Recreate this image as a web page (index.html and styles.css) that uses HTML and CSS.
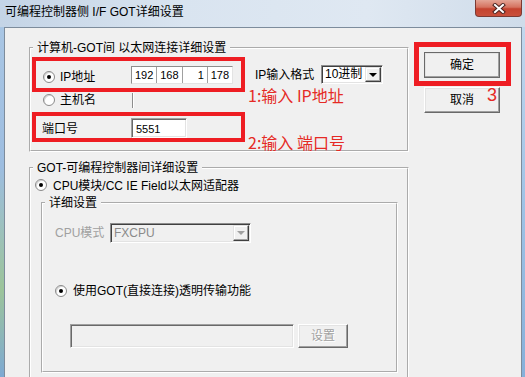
FILE: index.html
```html
<!DOCTYPE html>
<html>
<head>
    <meta charset="UTF-8">
    <title>可编程控制器侧 I/F GOT详细设置</title>
    <link rel="stylesheet" href="styles.css">
</head>
<body>
    <div class="window">
        <div class="titlebar">
            <span class="title">可编程控制器侧 I/F GOT详细设置</span>
            <span class="close">
                <svg width="14" height="11" viewBox="0 0 14 11">
                    <path d="M3 2 L11 9 M11 2 L3 9" stroke="#4a2320" stroke-width="4" stroke-linecap="square"/>
                    <path d="M3 2 L11 9 M11 2 L3 9" stroke="#fff" stroke-width="2" stroke-linecap="square"/>
                </svg>
            </span>
        </div>
        <div class="frame">
            <div class="frame-left"></div>
            <div class="client">
                <div class="main">
                    <fieldset class="group group-eth">
                        <legend>计算机-GOT间 以太网连接详细设置</legend>
                        <div class="row row-ip">
                            <div class="choice">
                                <span class="radio on"></span>
                                <span class="choice-text">IP地址</span>
                            </div>
                            <div class="ipbox">
                                <span>192</span>
                                <span>168</span>
                                <span>1</span>
                                <span>178</span>
                            </div>
                            <span class="fmt-label">IP输入格式</span>
                            <div class="combo combo-fmt">
                                <span class="combo-text">10进制</span>
                                <span class="combo-btn"><i class="arrow"></i></span>
                            </div>
                        </div>
                        <div class="row row-host">
                            <div class="choice">
                                <span class="radio"></span>
                                <span class="choice-text">主机名</span>
                            </div>
                            <span class="host-edge"></span>
                        </div>
                        <div class="row row-port">
                            <span class="port-label">端口号</span>
                            <div class="edit edit-port">5551</div>
                        </div>
                    </fieldset>

                    <fieldset class="group group-plc">
                        <legend>GOT-可编程控制器间详细设置</legend>
                        <div class="row row-adapter">
                            <span class="radio on"></span>
                            <span class="choice-text">CPU模块/CC IE Field以太网适配器</span>
                        </div>
                        <fieldset class="group group-detail">
                            <legend>详细设置</legend>
                            <div class="row row-cpu">
                                <span class="cpu-label">CPU模式</span>
                                <div class="combo combo-cpu disabled">
                                    <span class="combo-text">FXCPU</span>
                                    <span class="combo-btn"><i class="arrow"></i></span>
                                </div>
                            </div>
                            <div class="row row-pass">
                                <span class="radio on"></span>
                                <span class="choice-text">使用GOT(直接连接)透明传输功能</span>
                            </div>
                            <div class="row row-setting">
                                <div class="edit edit-setting"></div>
                                <span class="btn btn-setting">设置</span>
                            </div>
                        </fieldset>
                    </fieldset>
                </div>
                <div class="actions">
                    <span class="btn btn-ok">确定</span>
                    <span class="btn btn-cancel">取消</span>
                </div>
            </div>
            <div class="frame-right"></div>
        </div>

        <!-- annotations drawn over the screenshot -->
        <div class="mark mark-ip"></div>
        <div class="mark mark-port"></div>
        <div class="mark mark-ok"></div>
        <span class="note note-ip">1:输入 IP地址</span>
        <span class="note note-port">2:输入 端口号</span>
        <span class="note note-ok">3</span>
    </div>
</body>
</html>
```

FILE: styles.css
```css
* {
    margin: 0;
    padding: 0;
    box-sizing: border-box;
}
body {
    width: 525px;
    height: 377px;
    overflow: hidden;
    font-family: "Liberation Sans", "Noto Sans CJK SC", sans-serif;
    font-size: 12px;
    line-height: 14px;
    color: #000;
}
.window {
    position: relative;
    width: 525px;
    height: 377px;
    overflow: hidden;
    background: #c9d8e8;
}

/* title bar */
.titlebar {
    display: flex;
    justify-content: space-between;
    height: 27px;
    background: linear-gradient(90deg, #c4d4e6 0%, #d9e4f0 35%, #dfe8f2 70%, #cfdcea 100%);
}
.title {
    padding: 5px 0 0 5px;
    line-height: 14px;
}
.close {
    display: flex;
    align-items: center;
    justify-content: center;
    width: 47px;
    height: 17px;
    margin-right: 3px;
    border: 1px solid #7c3a33;
    border-top: 0;
    border-radius: 0 0 4px 4px;
    background: linear-gradient(#e4a596 0%, #d5725f 45%, #c4432f 55%, #c9503c 100%);
}

/* window frame */
.frame {
    display: flex;
    height: 350px;
}
.frame-left {
    width: 4px;
    background: linear-gradient(#a9c6e4 0%, #9dbde0 40%, #9cc49a 75%, #7ea9d3 100%);
}
.frame-right {
    width: 3px;
    background: linear-gradient(#c2d8ee 0%, #9fc3e6 50%, #86b0da 100%);
}
.client {
    display: flex;
    width: 518px;
    border: 1px solid #7d8c9c;
    border-bottom: 0;
    background: #f0f0f0;
}
.main {
    width: 380px;
    margin-left: 24px;
}

/* group boxes */
.group {
    min-width: 0;
    border: 2px groove #fff;
}
.group legend {
    margin-left: 2px;
    padding: 0 4px;
    line-height: 14px;
}
.group-eth {
    margin-top: 13px;
    padding-bottom: 12px;
}
.group-plc {
    margin-top: 9px;
    padding-bottom: 20px;
}
.group-detail {
    width: 357px;
    margin: 3px 0 0 10px;
    padding-bottom: 23px;
}
.row {
    display: flex;
    align-items: flex-start;
}

/* radios */
.radio {
    position: relative;
    flex: none;
    width: 12px;
    height: 12px;
    border: 1px solid #8a8a8a;
    border-radius: 50%;
    background: #fff;
    box-shadow: inset 1px 1px 0 #d6d6d6;
}
.radio.on::after {
    content: "";
    position: absolute;
    left: 3px;
    top: 3px;
    width: 4px;
    height: 4px;
    border-radius: 50%;
    background: #000;
}
.choice {
    display: flex;
    align-items: flex-start;
    width: 88px;
    margin-left: 12px;
}
.choice-text {
    margin-left: 5px;
    white-space: nowrap;
}

/* first group */
.row-ip {
    height: 19px;
    margin-top: 10px;
}
.row-ip .radio {
    margin-top: 6px;
}
.row-ip .choice-text {
    margin-top: 5px;
}
.ipbox {
    display: flex;
    width: 102px;
    height: 18px;
    margin-top: 1px;
    border: 1px solid;
    border-color: #8d8d8d #e3e3e3 #e3e3e3 #8d8d8d;
    background: #fff;
    font-size: 11px;
    line-height: 16px;
}
.ipbox span {
    flex: 1;
    padding-right: 3px;
    text-align: right;
    border-left: 1px solid #a0a0a0;
}
.ipbox span:first-child {
    border-left: 0;
}
.fmt-label {
    width: 66px;
    margin: 3px 0 0 22px;
    white-space: nowrap;
}
.combo {
    display: flex;
    border: 1px solid;
    border-color: #8d8d8d #fff #fff #8d8d8d;
    background: #fff;
    box-shadow: inset 1px 1px 0 #404040, inset -1px -1px 0 #e3e3e3;
}
.combo-text {
    flex: 1;
    padding: 1px 0 0 3px;
    font-size: 12px;
    line-height: 14px;
}
.combo-btn {
    display: flex;
    align-items: center;
    justify-content: center;
    width: 16px;
    margin: 1px 1px 1px 0;
    border: 1px solid;
    border-color: #e3e3e3 #404040 #404040 #e3e3e3;
    background: #f0f0f0;
    box-shadow: inset -1px -1px 0 #a0a0a0, inset 1px 1px 0 #fff;
}
.arrow {
    width: 0;
    height: 0;
    border-left: 4px solid transparent;
    border-right: 4px solid transparent;
    border-top: 4px solid #000;
}
.combo-fmt {
    width: 62px;
    height: 19px;
}
.row-host {
    height: 15px;
    margin-top: 9px;
}
.row-host .radio {
    margin-top: 1px;
}
.host-edge {
    width: 2px;
    height: 15px;
    margin-left: 1px;
    border-left: 1px solid #8d8d8d;
    border-right: 1px solid #fff;
}
.row-port {
    margin-top: 10px;
}
.port-label {
    width: 89px;
    margin: 4px 0 0 11px;
}
.edit {
    border: 1px solid;
    border-color: #a0a0a0 #fff #fff #a0a0a0;
    background: #fff;
    box-shadow: inset 1px 1px 0 #696969, inset -1px -1px 0 #e3e3e3;
}
.edit-port {
    width: 56px;
    height: 20px;
    padding: 3px 0 0 4px;
    font-size: 11px;
    line-height: 14px;
}

/* second group */
.row-adapter {
    margin-top: 4px;
}
.row-adapter .radio {
    margin-left: 4px;
}
.row-adapter .choice-text {
    margin-left: 6px;
}
.row-cpu {
    margin-top: 13px;
}
.cpu-label {
    width: 55px;
    margin: 3px 0 0 12px;
    color: #a0a0a0;
}
.combo-cpu {
    width: 141px;
    height: 20px;
}
.combo.disabled {
    background: #f0f0f0;
}
.combo.disabled .combo-text {
    padding-top: 2px;
    color: #8a8a8a;
}
.combo.disabled .arrow {
    border-top-color: #a0a0a0;
}
.row-pass {
    margin-top: 41px;
}
.row-pass .radio {
    margin: 1px 0 0 12px;
}
.row-pass .choice-text {
    margin-left: 6px;
}
.row-setting {
    margin-top: 26px;
}
.edit-setting {
    width: 224px;
    height: 24px;
    margin-left: 27px;
    background: #f0f0f0;
}

/* buttons */
.btn {
    display: flex;
    align-items: center;
    justify-content: center;
    border: 1px solid;
    border-color: #fff #696969 #696969 #fff;
    background: #f0f0f0;
    box-shadow: inset -1px -1px 0 #a0a0a0, inset 1px 1px 0 #e3e3e3;
}
.btn-setting {
    width: 50px;
    height: 24px;
    margin-left: 4px;
    color: #a0a0a0;
    text-shadow: 1px 1px 0 #fff;
}
.actions {
    display: flex;
    flex-direction: column;
    width: 76px;
    margin: 24px 0 0 15px;
}
.btn-ok {
    height: 26px;
    outline: 1px solid #696969;
    outline-offset: -1px;
    border-color: #fff #404040 #404040 #fff;
}
.btn-cancel {
    height: 26px;
    margin-top: 9px;
}

/* red annotations */
.mark {
    position: absolute;
    border: 4px solid #ee1d23;
}
.mark-ip {
    left: 32px;
    top: 57px;
    width: 213px;
    height: 35px;
}
.mark-port {
    left: 32px;
    top: 112px;
    width: 213px;
    height: 30px;
}
.mark-ok {
    left: 414px;
    top: 42px;
    width: 97px;
    height: 44px;
    border-width: 5px;
}
.note {
    position: absolute;
    font-family: "Noto Sans CJK SC", sans-serif;
    font-size: 16px;
    line-height: 18px;
    color: #e52a25;
    white-space: nowrap;
}
.note-ip {
    left: 248px;
    top: 86px;
}
.note-port {
    left: 248px;
    top: 133px;
}
.note-ok {
    left: 487px;
    top: 85px;
    font-family: "Liberation Sans", sans-serif;
    font-size: 18px;
    line-height: 20px;
}
```
